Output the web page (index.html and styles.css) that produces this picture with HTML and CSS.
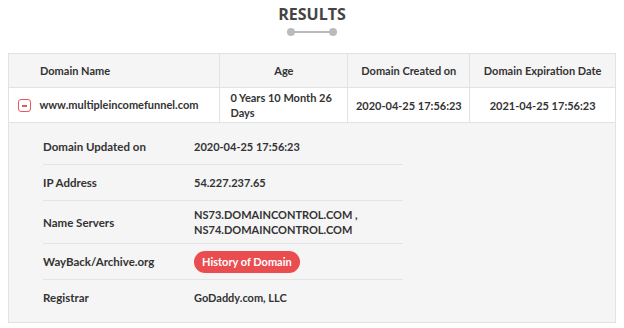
FILE: index.html
```html
<!DOCTYPE html>
<html lang="en">
<head>
    <meta charset="UTF-8">
    <title>Domain Age Results</title>
    <link rel="stylesheet" href="styles.css">
</head>
<body>
    <div class="heading">
        <h2>RESULTS</h2>
        <div class="divider"><span></span><i></i><span></span></div>
    </div>

    <table class="results">
        <thead>
            <tr>
                <th class="col-name">Domain Name</th>
                <th class="col-age">Age</th>
                <th class="col-created">Domain Created on</th>
                <th class="col-expire">Domain Expiration Date</th>
            </tr>
        </thead>
        <tbody>
            <tr class="main-row">
                <td class="name">
                    <span class="toggle"><b></b></span>
                    www.multipleincomefunnel.com
                </td>
                <td class="age">0 Years 10 Month 26 Days</td>
                <td class="center">2020-04-25 17:56:23</td>
                <td class="center">2021-04-25 17:56:23</td>
            </tr>
            <tr class="detail-row">
                <td colspan="4">
                    <div class="details">
                        <div class="item">
                            <div class="label">Domain Updated on</div>
                            <div class="value">2020-04-25 17:56:23</div>
                        </div>
                        <div class="item">
                            <div class="label">IP Address</div>
                            <div class="value">54.227.237.65</div>
                        </div>
                        <div class="item tall">
                            <div class="label">Name Servers</div>
                            <div class="value">NS73.DOMAINCONTROL.COM ,<br>NS74.DOMAINCONTROL.COM</div>
                        </div>
                        <div class="item">
                            <div class="label">WayBack/Archive.org</div>
                            <div class="value"><a href="#" class="btn">History of Domain</a></div>
                        </div>
                        <div class="item last">
                            <div class="label">Registrar</div>
                            <div class="value">GoDaddy.com, LLC</div>
                        </div>
                    </div>
                </td>
            </tr>
        </tbody>
    </table>
</body>
</html>
```

FILE: styles.css
```css
body {
    margin: 0;
    padding: 0 8px;
    background: #fff;
    font-family: Lato, "Open Sans", Arial, sans-serif;
    font-size: 11px;
    color: #333;
}
.heading {
    display: flex;
    flex-direction: column;
    align-items: center;
    padding-top: 4px;
    height: 53px;
    box-sizing: border-box;
}
.heading h2 {
    margin: 0;
    font-family: "Open Sans", Arial, sans-serif;
    font-size: 16px;
    line-height: 20px;
    font-weight: 700;
    color: #444;
}
.divider {
    display: flex;
    align-items: center;
    margin-top: 4px;
}
.divider span {
    width: 8px;
    height: 8px;
    border-radius: 50%;
    background: #bbb;
}
.divider i {
    width: 34px;
    height: 2px;
    background: #bbb;
}
.results {
    width: 608px;
    border-collapse: collapse;
    border: 1px solid #e2e2e2;
}
.results th {
    background: #f5f5f5;
    font-weight: 700;
    height: 33px;
    padding: 0;
    border: 1px solid #e2e2e2;
    text-align: center;
}
.results th.col-name {
    width: 212px;
    text-align: left;
    padding-left: 31px;
    box-sizing: border-box;
}
.col-age { width: 128px; }
.col-created { width: 122px; }
.col-expire { width: 146px; }
.main-row td {
    height: 34px;
    padding: 0;
    border: 1px solid #e2e2e2;
    font-weight: 700;
}
.main-row .name {
    padding-left: 9px;
}
.toggle {
    display: inline-flex;
    align-items: center;
    justify-content: center;
    width: 11px;
    height: 11px;
    border: 1.5px solid #e9575a;
    border-radius: 3px;
    vertical-align: middle;
    margin-right: 6px;
}
.toggle b {
    width: 5px;
    height: 1.5px;
    background: #e9575a;
}
.main-row .age {
    padding: 0 8px 0 10px;
    line-height: 15px;
}
.main-row .center {
    text-align: center;
}
.detail-row td {
    background: #f5f5f5;
    padding: 6px 0 7px 34px;
    border: 1px solid #e2e2e2;
}
.details {
    width: 360px;
}
.item {
    display: flex;
    align-items: center;
    height: 35px;
    border-bottom: 1px solid #e4e4e4;
    font-weight: 700;
}
.item.tall {
    height: 42px;
}
.item.last {
    border-bottom: none;
}
.label {
    width: 151px;
    font-size: 11.5px;
}
.value {
    line-height: 15px;
}
.btn {
    display: inline-block;
    background: #ea4d4f;
    color: #fff;
    text-decoration: none;
    font-weight: 700;
    padding: 3px 8px;
    line-height: 16px;
    border-radius: 11px;
}
```
